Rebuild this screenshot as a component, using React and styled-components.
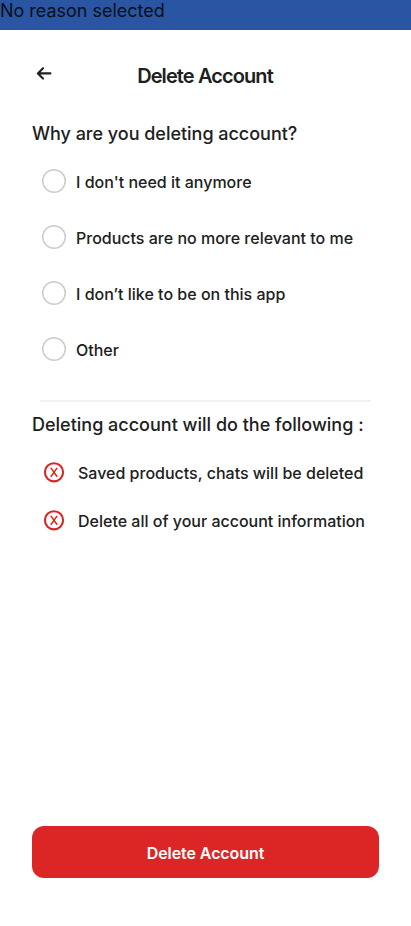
import React from "react";
import styled, { createGlobalStyle } from "styled-components";

const Global = createGlobalStyle`
  * { box-sizing: border-box; }
  body { margin: 0; background: #fff; color: #202020; font-family: Inter, "Liberation Sans", sans-serif; }
`;
const Screen = styled.main`
  height: 926px;
  display: flex;
  flex-direction: column;
  overflow: hidden;
`;
const Status = styled.div`
  height: 30px;
  background: #2a55a2;
  color: #0b0f18;
  font-size: 18px;
  line-height: 22px;
  letter-spacing: -0.02px;
`;
const Header = styled.header`
  display: grid;
  grid-template-columns: 24px 1fr 24px;
  align-items: center;
  height: 32px;
  margin: 30px 32px 0;
`;
const BackButton = styled.button`
  width: 24px;
  height: 24px;
  margin-top: -6px;
  padding: 0;
  border: 0;
  background: none;
  color: #202020;
  svg { display: block; }
`;
const Title = styled.h1`
  margin: 0;
  padding-right: 1px;
  text-align: center;
  font-size: 20px;
  font-weight: 600;
  letter-spacing: -0.9px;
`;
const Heading = styled.h2`
  margin: ${(p) => p.$top}px 0 0 32px;
  font-size: 18px;
  line-height: 24px;
  font-weight: 500;
  letter-spacing: ${(p) => p.$tracking || "normal"};
  white-space: nowrap;
`;
const Reasons = styled.div`
  display: grid;
  grid-auto-rows: 24px;
  gap: 32px;
  margin: 23px 0 0 42px;
`;
const Reason = styled.label`
  display: flex;
  align-items: center;
  gap: 10px;
  font-size: 16px;
  font-weight: 500;
  white-space: nowrap;
  span { padding-top: 2px; }
`;
const Radio = styled.input`
  appearance: none;
  width: 24px;
  height: 24px;
  margin: 0;
  border-radius: 50%;
  box-shadow: inset 0 0 0 1.5px #cccccc;
`;
const Divider = styled.hr`
  width: 331px;
  height: 2px;
  margin: 39px 0 0 40px;
  border: 0;
  background: #f0f0f0;
`;
const Effects = styled.ul`
  list-style: none;
  display: grid;
  grid-auto-rows: 24px;
  gap: 24px;
  margin: 23px 0 0 42px;
  padding: 0;
`;
const Effect = styled.li`
  display: flex;
  align-items: center;
  gap: 12px;
  font-size: 16px;
  font-weight: 500;
  white-space: nowrap;
  span { padding-top: 2px; }
`;
const DeleteButton = styled.button`
  flex: none;
  height: 52px;
  margin: auto 32px 48px;
  padding: 2px 0 0;
  border: 0;
  border-radius: 12px;
  background: #dc2626;
  color: #fff;
  font: 600 16px Inter, sans-serif;
  letter-spacing: -0.08px;
`;

const ArrowIcon = () => (
  <svg width="24" height="24" viewBox="0 0 24 24" fill="none" stroke="currentColor" strokeWidth="2.1" strokeLinecap="round" strokeLinejoin="round">
    <path d="M18.4 12.4H6M11 7.2L5.9 12.4L11 17.6" />
  </svg>
);
const CrossIcon = () => (
  <svg width="24" height="24" viewBox="0 0 24 24" fill="none" stroke="#dc2626" strokeWidth="2.1">
    <circle cx="12" cy="12.3" r="9.1" />
    <path d="M8.8 7.9L15.2 16.8M15.2 7.9L8.8 16.8" strokeWidth="1.5" />
  </svg>
);

const reasons = ["I don't need it anymore", "Products are no more relevant to me", "I don’t like to be on this app", "Other"];
const effects = ["Saved products, chats will be deleted", "Delete all of your account information"];

export default function App() {
  return (
    <Screen>
      <Global />
      <Status>No reason selected</Status>
      <Header>
        <BackButton aria-label="Back"><ArrowIcon /></BackButton>
        <Title>Delete Account</Title>
      </Header>
      <Heading $top={30} $tracking="-0.02px">Why are you deleting account?</Heading>
      <Reasons>
        {reasons.map((r) => (
          <Reason key={r}><Radio type="radio" name="reason" /><span>{r}</span></Reason>
        ))}
      </Reasons>
      <Divider />
      <Heading $top={11}>Deleting account will do the following :</Heading>
      <Effects>
        {effects.map((e) => (
          <Effect key={e}><CrossIcon /><span>{e}</span></Effect>
        ))}
      </Effects>
      <DeleteButton>Delete Account</DeleteButton>
    </Screen>
  );
}
